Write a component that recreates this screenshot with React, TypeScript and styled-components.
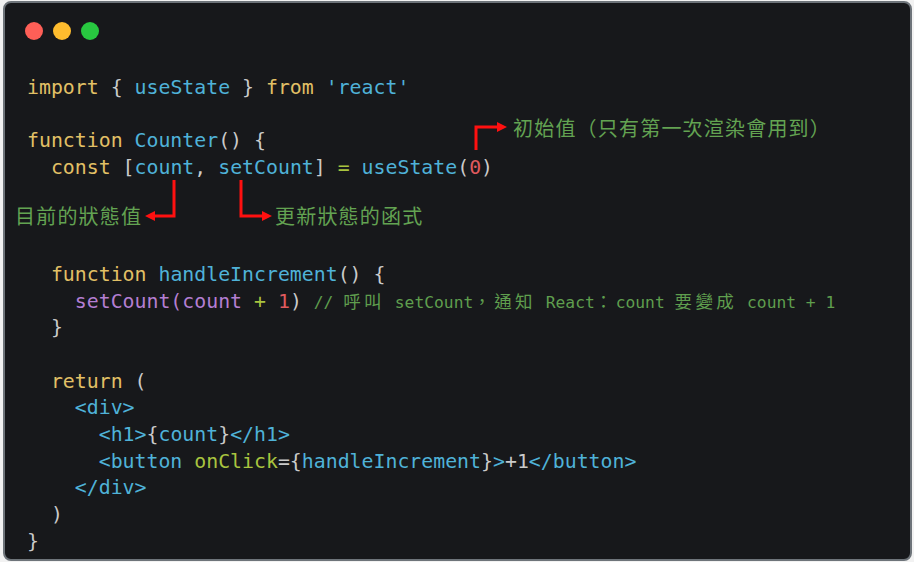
import React from "react";
import styled, { createGlobalStyle } from "styled-components";

const Global = createGlobalStyle`
  html, body { margin: 0; padding: 0; background: #f2f2f2; }
  body { width: 914px; height: 562px; overflow: hidden; }
`;

const Page = styled.div`
  padding: 1px 0 0 3px;
`;

const Window = styled.div`
  position: relative;
  box-sizing: border-box;
  width: 909px;
  height: 560px;
  background: #17181b;
  border: 2px solid #6e747a;
  border-radius: 8px;
  display: flex;
  flex-direction: column;
  overflow: hidden;
`;

const TitleBar = styled.div`
  display: flex;
  gap: 10px;
  padding: 19px 0 0 20px;
`;

const Dot = styled.span<{ $c: string }>`
  width: 18px;
  height: 18px;
  border-radius: 50%;
  background: ${(p) => p.$c};
`;

const Code = styled.div`
  padding: 35px 0 0 22px;
  font-family: "DejaVu Sans Mono", "Noto Sans CJK TC", monospace;
  font-size: 19.85px;
  color: #cacaca;
`;

const Line = styled.div`
  height: 26.7px;
  line-height: 26.7px;
  white-space: pre;
`;

const tone = {
  kw: "#e2c066",
  id: "#4fb2d8",
  pu: "#cacaca",
  op: "#a9c43f",
  num: "#e05a5e",
  fn: "#b47ed2",
  cm: "#5f9e4e",
};

const T = styled.span<{ $t: keyof typeof tone }>`
  color: ${(p) => tone[p.$t]};
`;

const Comment = styled.span`
  color: #5f9e4e;
  font-size: 16.3px;
`;

const Wide = styled.span`
  font-size: 17.5px;
  letter-spacing: 3.4px;
`;

const Overlay = styled.svg`
  position: absolute;
  left: -5px;
  top: -3px;
  pointer-events: none;
`;

const Note = styled.span<{ $x: number; $y: number }>`
  position: absolute;
  left: ${(p) => p.$x}px;
  top: ${(p) => p.$y}px;
  font-family: "Noto Sans CJK TC", "Noto Sans CJK SC", sans-serif;
  font-size: 20px;
  font-weight: 400;
  letter-spacing: 1.2px;
  line-height: 24px;
  color: #63a352;
  white-space: nowrap;
`;

export default function App() {
  return (
    <Page>
      <Global />
      <Window>
        <TitleBar>
          <Dot $c="#fe5f57" />
          <Dot $c="#febc2e" />
          <Dot $c="#28c840" />
        </TitleBar>
        <Code>
          <Line>
            <T $t="kw">import</T> {"{ "}
            <T $t="id">useState</T>
            {" } "}
            <T $t="kw">from</T> <T $t="id">'react'</T>
          </Line>
          <Line> </Line>
          <Line>
            <T $t="kw">function</T> <T $t="id">Counter</T>
            {"() {"}
          </Line>
          <Line>
            {"  "}
            <T $t="kw">const</T> [<T $t="id">count</T>, <T $t="id">setCount</T>]{" "}
            <T $t="op">=</T> <T $t="id">useState</T>(<T $t="num">0</T>)
          </Line>
          <Line> </Line>
          <Line> </Line>
          <Line> </Line>
          <Line>
            {"  "}
            <T $t="kw">function</T> <T $t="id">handleIncrement</T>
            {"() {"}
          </Line>
          <Line>
            {"    "}
            <T $t="fn">setCount(count</T> <T $t="op">+</T> <T $t="num">1</T>){" "}
            <Comment>
              // <Wide>呼叫</Wide> setCount<Wide>，通知</Wide> React<Wide>：</Wide>count{" "}
              <Wide>要變成</Wide> count + 1
            </Comment>
          </Line>
          <Line>{"  }"}</Line>
          <Line> </Line>
          <Line>
            {"  "}
            <T $t="kw">return</T> (
          </Line>
          <Line>
            {"    "}
            <T $t="id">{"<div>"}</T>
          </Line>
          <Line>
            {"      "}
            <T $t="id">{"<h1>"}</T>
            {"{"}
            <T $t="id">count</T>
            {"}"}
            <T $t="id">{"</h1>"}</T>
          </Line>
          <Line>
            {"      "}
            <T $t="id">{"<button "}</T>
            <T $t="op">onClick</T>
            {"={"}
            <T $t="id">handleIncrement</T>
            {"}"}
            <T $t="id">{">"}</T>
            {"+1"}
            <T $t="id">{"</button>"}</T>
          </Line>
          <Line>
            {"    "}
            <T $t="id">{"</div>"}</T>
          </Line>
          <Line>{"  )"}</Line>
          <Line>{"}"}</Line>
        </Code>

        <Overlay width={914} height={562} viewBox="0 0 914 562">
          <g fill="none" stroke="#ff1010" strokeWidth={3}>
            <path d="M476 150 V127 H498" />
            <path d="M174 180 V216 H155" />
            <path d="M241 180 V216 H262" />
          </g>
          <g fill="#ff1010">
            <polygon points="497,122 507,127 497,132" />
            <polygon points="155,211 145,216 155,221" />
            <polygon points="262,211 272,216 262,221" />
          </g>
        </Overlay>
        <Note $x={508} $y={113}>初始值（只有第一次渲染會用到）</Note>
        <Note $x={10} $y={201}>目前的狀態值</Note>
        <Note $x={270} $y={201}>更新狀態的函式</Note>
      </Window>
    </Page>
  );
}
